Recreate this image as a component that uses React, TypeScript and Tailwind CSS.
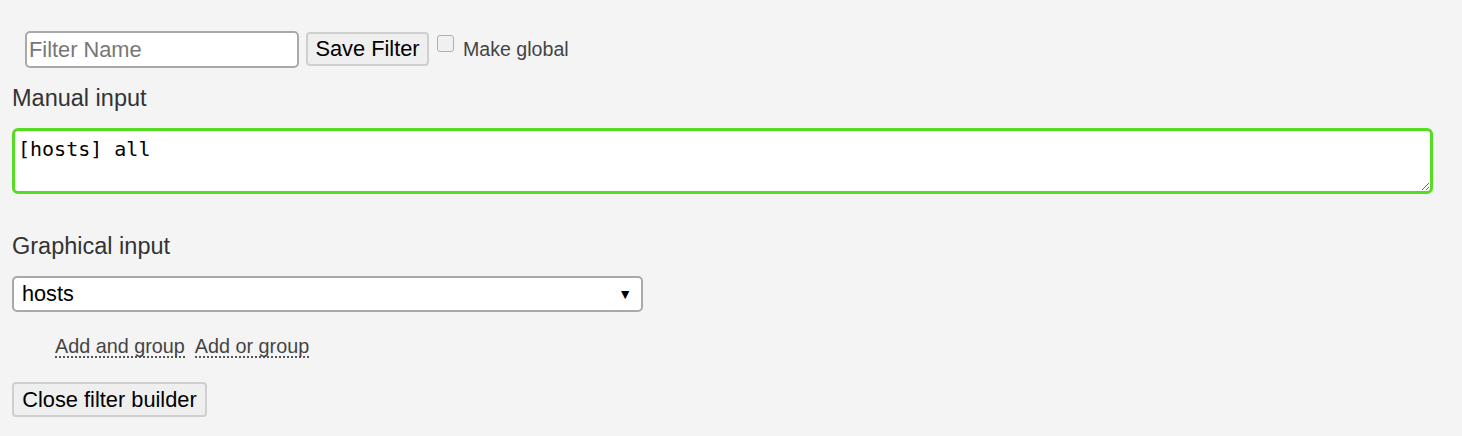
export default function App() {
    return (
        <div className="min-h-[436px] w-full bg-[#f4f4f4] font-['Liberation_Sans',Arial,sans-serif] text-[#333]">
            <div className="pt-[31px] pl-[12px] pr-[30px]">
                {/* Filter save row */}
                <div className="flex items-start pl-[13px]">
                    <input
                        placeholder="Filter Name"
                        className="h-[37px] w-[274px] rounded-[5px] border-2 border-[#a9a9a9] bg-white px-[2px] text-[21.8px] text-black placeholder:text-[#777] outline-none"
                    />
                    <button className="ml-[7px] mt-[1px] h-[34px] w-[123px] rounded-[4px] border-2 border-[#cfcfcf] bg-[#efefef] text-[21.8px] leading-[26px] text-black">
                        Save Filter
                    </button>
                    <input
                        type="checkbox"
                        className="ml-[8px] mt-[4px] h-[17px] w-[17px] appearance-none rounded-[3px] border border-[#b0b0b0] bg-[#f0f0f0]"
                    />
                    <span className="ml-[9px] mt-[6px] text-[19.6px] leading-[24px] text-[#444]">Make global</span>
                </div>

                {/* Manual input */}
                <div className="mt-[17px] text-[23.5px] leading-[26px]">Manual input</div>
                <textarea
                    defaultValue="[hosts] all"
                    className="mt-[17px] block h-[66px] w-[1421px] rounded-[6px] border-[3px] border-[#55dd22] bg-white px-[3px] py-[7px] font-['DejaVu_Sans_Mono',monospace] text-[20px] leading-[22px] text-black outline-none"
                />

                {/* Graphical input */}
                <div className="mt-[39px] text-[23.5px] leading-[26px]">Graphical input</div>
                <div className="relative mt-[17px] h-[36px] w-[631px] rounded-[5px] border-2 border-[#a9a9a9] bg-white">
                    <span className="absolute left-[8px] top-[4px] text-[21.7px] leading-[24px] text-black">hosts</span>
                    <span className="absolute right-[9px] top-[7px] text-[14px] leading-[18px] text-black">▼</span>
                </div>

                <div className="mt-[24px] flex gap-[10px] pl-[43px] text-[19.8px] leading-[22px] text-[#444]">
                    <a className="border-b-2 border-dotted border-[#555] leading-[20px]">Add and group</a>
                    <a className="border-b-2 border-dotted border-[#555] leading-[20px]">Add or group</a>
                </div>

                <button className="mt-[24px] h-[35px] w-[195px] rounded-[4px] border-2 border-[#cfcfcf] bg-[#efefef] text-[21.8px] leading-[26px] text-black">
                    Close filter builder
                </button>
            </div>
        </div>
    );
}
